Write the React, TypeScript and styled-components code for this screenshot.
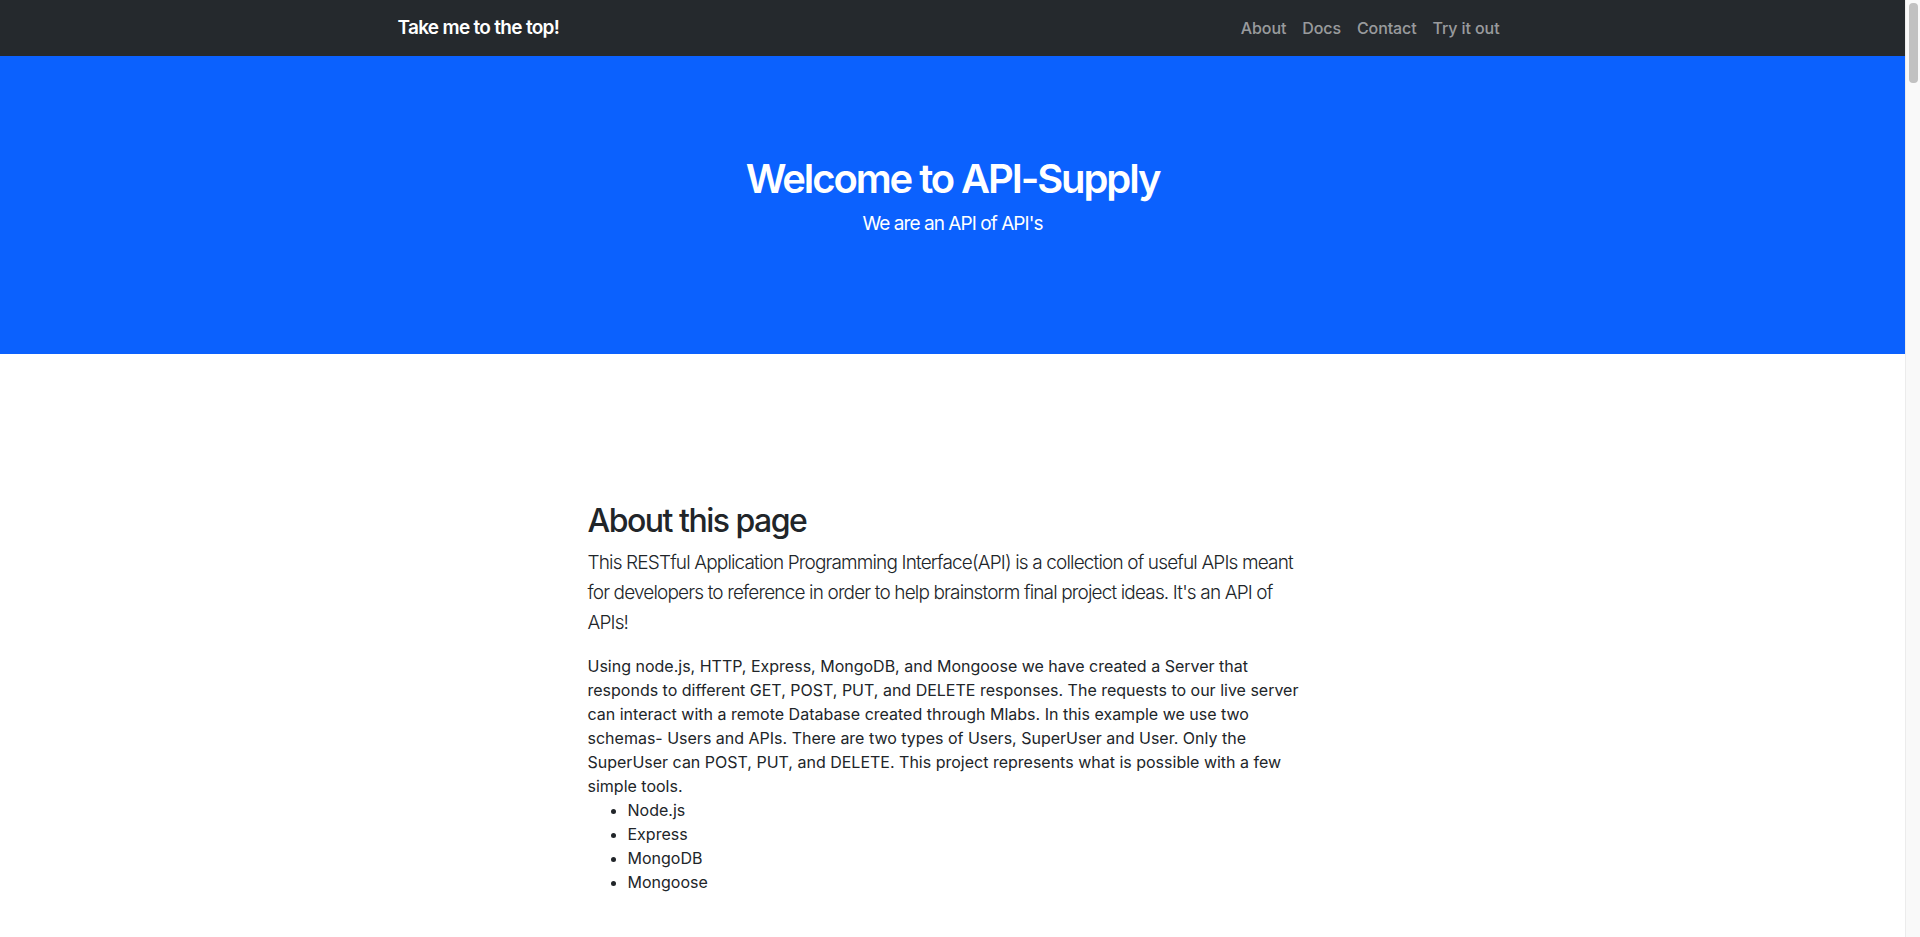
import React from "react";
import styled, { createGlobalStyle } from "styled-components";

const Global = createGlobalStyle`
  html, body { margin: 0; padding: 0; }
  body {
    font-family: Inter, "Helvetica Neue", Arial, sans-serif;
    font-size: 16px;
    line-height: 1.5;
    color: #212529;
    background: #fff;
    overflow-x: hidden;
  }
`;

const Shell = styled.div`
  display: flex;
  align-items: flex-start;
`;

const Page = styled.div`
  flex: 1;
  min-width: 0;
  min-height: 1200px;
`;

const ScrollTrack = styled.div`
  position: sticky;
  top: 0;
  flex: 0 0 15px;
  height: 100vh;
  background: #f9f9f9;
  border-left: 1px solid #ececec;
  box-sizing: border-box;
  padding: 3px 2px 0 3px;
`;

const ScrollThumb = styled.div`
  height: 80px;
  border-radius: 4px;
  background: #c1c1c1;
`;

const Navbar = styled.nav`
  background: #25292d;
  height: 56px;
  display: flex;
  align-items: center;
`;

const Container = styled.div`
  width: 100%;
  max-width: 1140px;
  margin: 0 auto;
  padding: 0 15px;
  box-sizing: border-box;
  display: flex;
  align-items: center;
  justify-content: space-between;
`;

const Brand = styled.a`
  color: #fff;
  font-size: 19px;
  font-weight: 600;
  letter-spacing: -0.7px;
  text-decoration: none;
`;

const NavList = styled.ul`
  list-style: none;
  margin: 0;
  padding: 0;
  display: flex;
`;

const NavLink = styled.a`
  display: block;
  padding: 8px;
  color: rgba(255, 255, 255, 0.55);
  font-size: 16px;
  font-weight: 500;
  letter-spacing: -0.1px;
  text-decoration: none;
`;

const Hero = styled.header`
  background: #0b61fe;
  color: #fff;
  text-align: center;
  padding: 99px 16px 97px;
  box-sizing: border-box;
  height: 298px;
`;

const HeroTitle = styled.h1`
  margin: 0 0 6px;
  font-size: 40px;
  font-weight: 600;
  line-height: 1.2;
  letter-spacing: -2.1px;
`;

const HeroSub = styled.p`
  margin: 0;
  font-size: 19px;
  line-height: 30px;
  letter-spacing: -0.95px;
`;

const Section = styled.main`
  display: grid;
  grid-template-columns: minmax(0, 730px);
  justify-content: center;
  padding: 148px 0 0;
`;

const Heading = styled.h2`
  margin: 0 0 8px;
  font-size: 32px;
  font-weight: 500;
  line-height: 1.2;
  letter-spacing: -1.5px;
`;

const Lead = styled.p`
  margin: 0 0 16px;
  font-size: 19px;
  font-weight: 300;
  line-height: 30px;
  letter-spacing: -0.85px;
`;

const Body = styled.p`
  margin: 0;
  font-size: 16px;
  line-height: 24px;
`;

const List = styled.ul`
  margin: 0;
  padding-left: 40px;
  font-size: 16px;
  line-height: 24px;
`;

export default function App() {
  return (
    <>
      <Global />
      <Shell>
        <Page>
          <Navbar>
            <Container>
              <Brand href="#">Take me to the top!</Brand>
              <NavList>
                <li><NavLink href="#">About</NavLink></li>
                <li><NavLink href="#">Docs</NavLink></li>
                <li><NavLink href="#">Contact</NavLink></li>
                <li><NavLink href="#">Try it out</NavLink></li>
              </NavList>
            </Container>
          </Navbar>
          <Hero>
            <HeroTitle>Welcome to API-Supply</HeroTitle>
            <HeroSub>We are an API of API's</HeroSub>
          </Hero>
          <Section>
            <div>
              <Heading>About this page</Heading>
              <Lead>
                This RESTful Application Programming Interface(API) is a collection of useful APIs meant for developers to reference in order to help brainstorm final project ideas. It's an API of APIs!
              </Lead>
              <Body>
                Using node.js, HTTP, Express, MongoDB, and Mongoose we have created a Server that responds to different GET, POST, PUT, and DELETE responses. The requests to our live server can interact with a remote Database created through Mlabs. In this example we use two schemas- Users and APIs. There are two types of Users, SuperUser and User. Only the SuperUser can POST, PUT, and DELETE. This project represents what is possible with a few simple tools.
              </Body>
              <List>
                <li>Node.js</li>
                <li>Express</li>
                <li>MongoDB</li>
                <li>Mongoose</li>
              </List>
            </div>
          </Section>
        </Page>
        <ScrollTrack>
          <ScrollThumb />
        </ScrollTrack>
      </Shell>
    </>
  );
}
